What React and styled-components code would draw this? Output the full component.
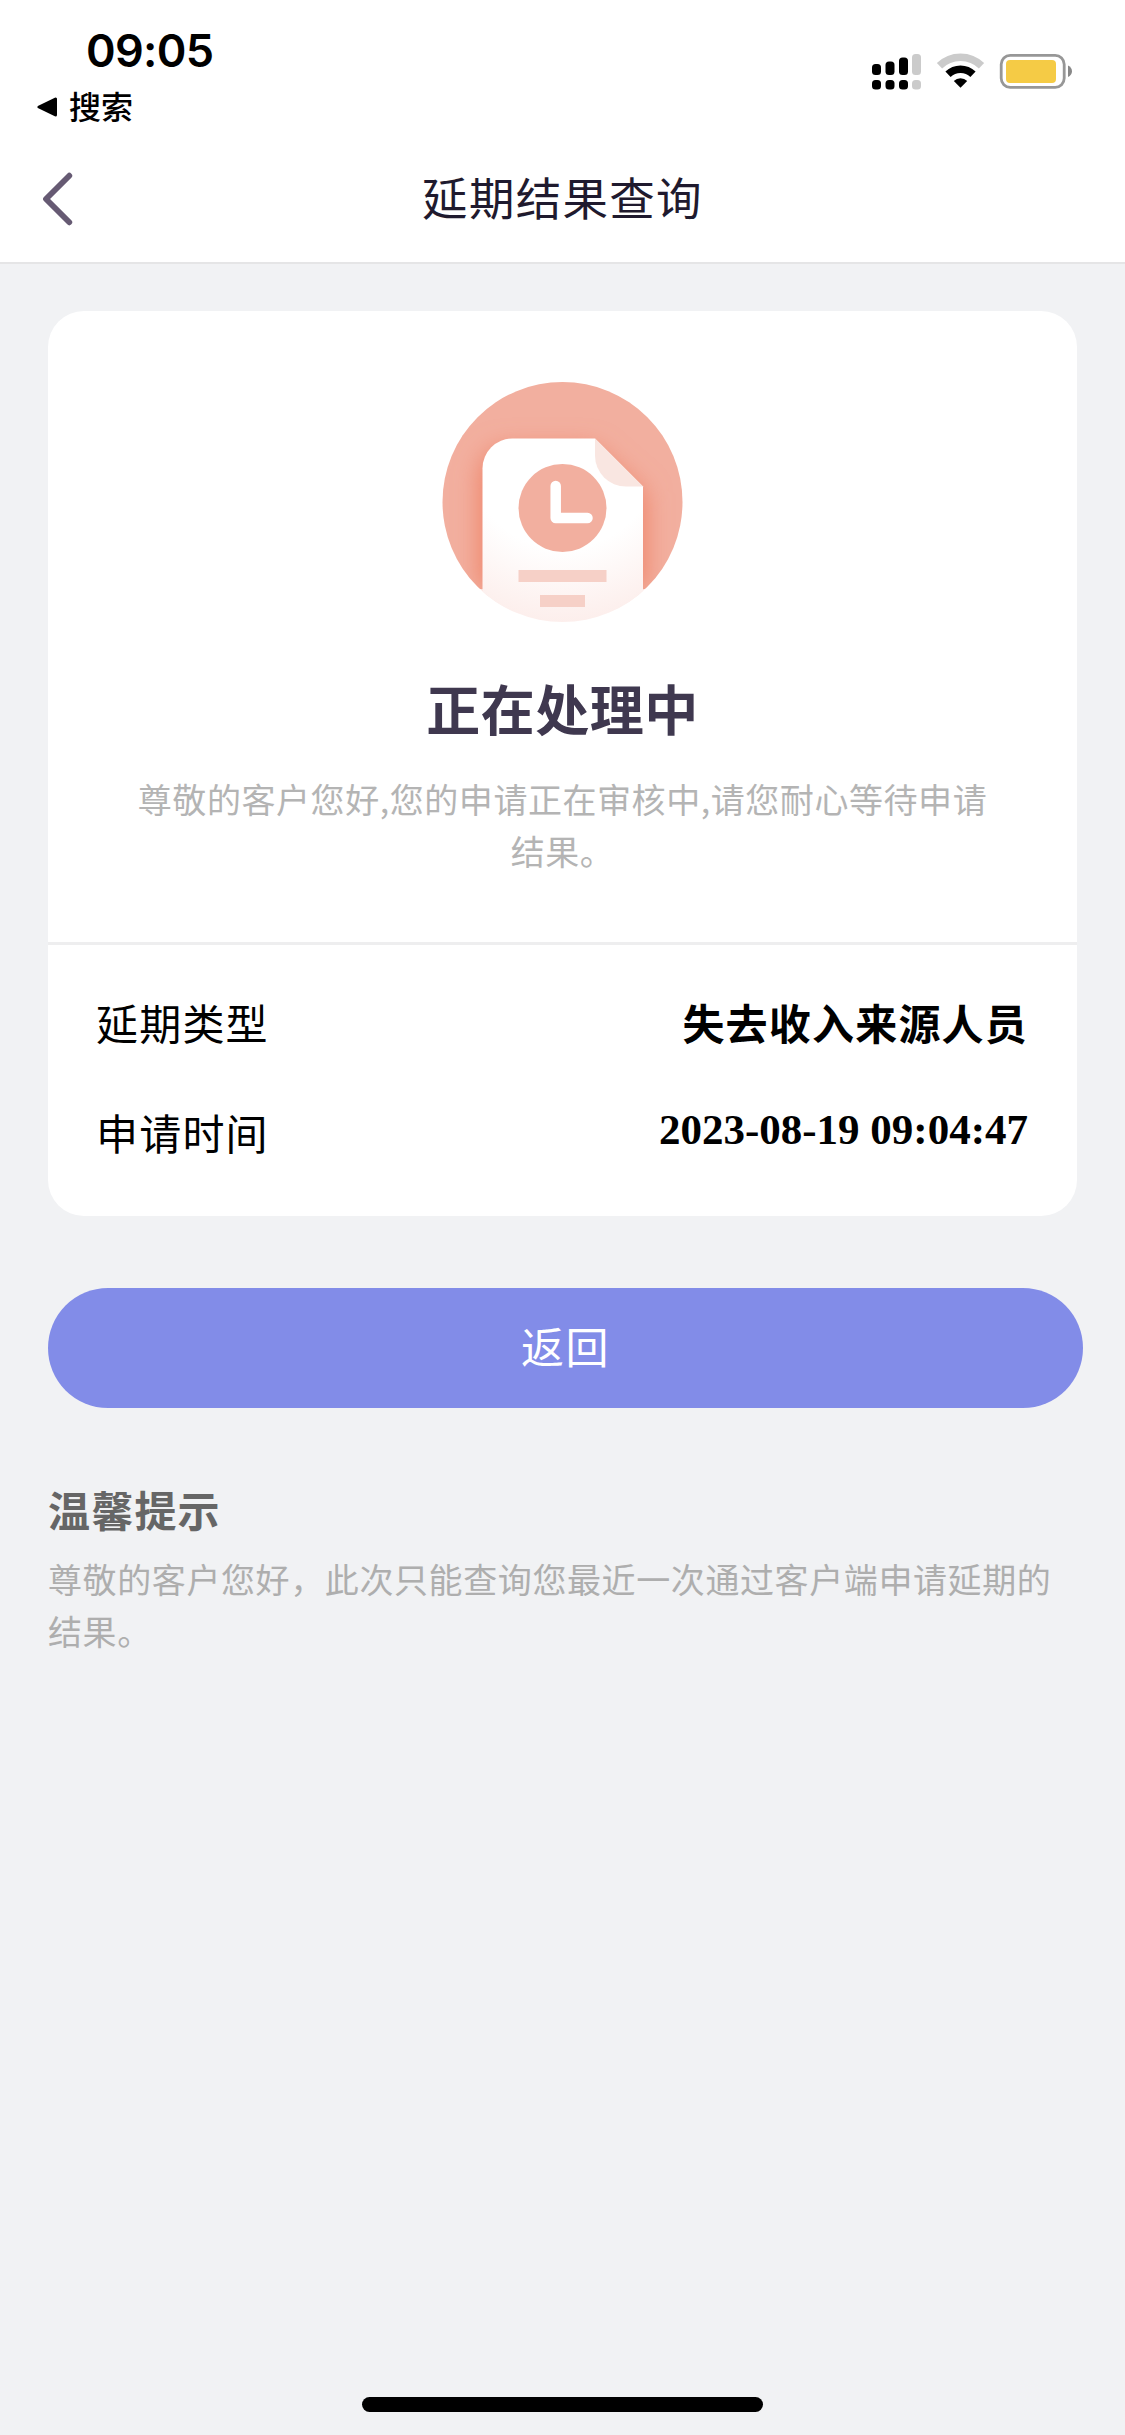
import React from "react";
import styled, { createGlobalStyle } from "styled-components";

const GlobalStyle = createGlobalStyle`
  * {
    box-sizing: border-box;
  }
  body {
    margin: 0;
    background: #f1f2f4;
    font-family: "Noto Sans CJK SC", sans-serif;
  }
`;

const Page = styled.div`
  display: flex;
  flex-direction: column;
  height: 2435px;
  overflow: hidden;
`;

const Header = styled.header`
  height: 264px;
  background: #fff;
  border-bottom: 2px solid #e5e5e6;
`;

const StatusBar = styled.div`
  display: flex;
  justify-content: space-between;
  height: 132px;
`;

const Clock = styled.div`
  height: 80px;
  padding: 19px 0 0 86px;
  font: 600 45px/64px Inter, sans-serif;
  letter-spacing: -0.7px;
  color: #000;
`;

const BackToApp = styled.div`
  display: flex;
  align-items: center;
  gap: 11px;
  height: 50px;
  padding-left: 37px;
  font-size: 32px;
  font-weight: 500;
  line-height: 50px;

  svg {
    margin-top: 3px;
  }
`;

const StatusIcons = styled.svg`
  display: block;
  margin: 48px 45px 0 0;
`;

const NavBar = styled.div`
  display: grid;
  grid-template-columns: 200px 1fr 200px;
  align-items: center;
  height: 134px;
`;

const BackIcon = styled.svg`
  display: block;
  margin-left: 38px;
`;

const Title = styled.h1`
  margin: 0 0 6px;
  text-align: center;
  font-size: 45.5px;
  font-weight: 400;
  line-height: 66px;
  letter-spacing: 1.3px;
  color: #1f1a2e;
`;

const Card = styled.section`
  width: 1029px;
  height: 905px;
  margin: 47px 0 0 48px;
  background: #fff;
  border-radius: 36px;
`;

const Result = styled.div`
  display: flex;
  flex-direction: column;
  align-items: center;
  height: 634px;
  padding-top: 71px;
  border-bottom: 3px solid #eeeeef;
`;

const Status = styled.h2`
  margin: 46px 0 0;
  font-size: 54px;
  font-weight: 700;
  line-height: 80px;
  letter-spacing: 0.5px;
  color: #3f384f;
`;

const Message = styled.p`
  width: 870px;
  margin: 25px 0 0;
  text-align: center;
  font-size: 34px;
  line-height: 52px;
  letter-spacing: 0.56px;
  color: #b4b4b4;
`;

const Details = styled.dl`
  display: flex;
  flex-direction: column;
  margin: 0;
  padding: 22px 49px 0 48px;
`;

const Row = styled.div`
  display: flex;
  justify-content: space-between;
  height: 110px;
  line-height: 110px;
  font-size: 42px;
  color: #000;
`;

const Label = styled.dt`
  letter-spacing: 1.2px;
`;

const Value = styled.dd`
  margin: 0;
  font-weight: 700;
  letter-spacing: 1.2px;
`;

const TimeValue = styled(Value)`
  font-family: "Liberation Serif", serif;
  font-size: 43px;
  line-height: 106px;
  letter-spacing: 0;
`;

const ReturnButton = styled.button`
  width: 1035px;
  height: 120px;
  margin: 72px 0 0 48px;
  padding: 0 0 6px;
  border: 0;
  border-radius: 60px;
  background: #828ce8;
  color: #fff;
  font-family: inherit;
  font-size: 43px;
  font-weight: 400;
  letter-spacing: 1.5px;
`;

const Tips = styled.section`
  width: 1029px;
  margin: 69px 0 0 48px;
`;

const TipsTitle = styled.h3`
  margin: 0;
  font-size: 42px;
  font-weight: 700;
  line-height: 64px;
  letter-spacing: 1.2px;
  color: #666;
`;

const TipsText = styled.p`
  margin: 12px 0 0;
  font-size: 34px;
  line-height: 52px;
  letter-spacing: 0.6px;
  color: #aeaeae;
`;

const HomeIndicator = styled.div`
  width: 401px;
  height: 15px;
  margin: auto auto 23px;
  border-radius: 8px;
  background: #000;
`;

const bars = [
  { x: 0, y: 16, height: 11, color: "#000" },
  { x: 13.5, y: 13.5, height: 13.5, color: "#000" },
  { x: 27, y: 9.5, height: 17.5, color: "#000" },
  { x: 40, y: 6, height: 21, color: "#cbcbcb" },
];

function PhoneStatus() {
  return (
    <StatusIcons width="208" height="48" viewBox="0 0 208 48">
      {bars.map((bar) => (
        <g key={bar.x} fill={bar.color}>
          <rect x={bar.x} y={bar.y} width="9" height={bar.height} rx="3.5" />
          <rect x={bar.x} y="32" width="9" height="9.5" rx="3.5" />
        </g>
      ))}
      <g fill="none" strokeWidth="7.5">
        <path d="M67.5 17.8A30 30 0 0 1 109.5 17.8" stroke="#cbcbcb" />
        <path d="M76 26.2A18 18 0 0 1 101 26.2" stroke="#000" />
      </g>
      <path d="M88.5 39.8L81.8 33A9.6 9.6 0 0 1 95.2 33Z" fill="#000" />
      <rect x="129.2" y="7.3" width="63" height="32" rx="9" fill="none" stroke="#979797" strokeWidth="2.8" />
      <rect x="134" y="12" width="50" height="23" rx="4" fill="#f5cb45" />
      <path d="M196 17.5Q200 19.5 200 23.2Q200 27 196 29Z" fill="#888" />
    </StatusIcons>
  );
}

function PendingIcon() {
  return (
    <svg width="241" height="240" viewBox="0 0 241 240">
      <defs>
        <clipPath id="disc">
          <circle cx="120.5" cy="120" r="120" />
        </clipPath>
        <clipPath id="sheet">
          <circle cx="120.5" cy="119.5" r="120.5" />
        </clipPath>
        <filter id="shadow" x="-30%" y="-30%" width="160%" height="160%">
          <feGaussianBlur stdDeviation="13" />
        </filter>
        <radialGradient id="paper" gradientUnits="userSpaceOnUse" cx="121" cy="70" r="185">
          <stop offset="0.52" stopColor="#fff" />
          <stop offset="1" stopColor="#fcebe8" />
        </radialGradient>
      </defs>
      <g clipPath="url(#disc)">
        <path d="M0 0H241V207H0Z" fill="#f2af9f" />
        <path d="M38 207V100Q38 66 68 66H150L203 112V207Z" fill="#ef8266" filter="url(#shadow)" />
      </g>
      <path
        d="M40.5 240V86.5A30 30 0 0 1 70.5 56.5H153L201 104.5V240Z"
        fill="url(#paper)"
        clipPath="url(#sheet)"
      />
      <path d="M153 56.5L201 104.5H184A31 31 0 0 1 153 73.5Z" fill="#f9e6e1" />
      <circle cx="120.5" cy="126" r="44" fill="#f2af9f" />
      <path d="M113.7 104V136H145.5" fill="none" stroke="#fff" strokeWidth="10.5" strokeLinecap="round" strokeLinejoin="round" />
      <rect x="76.5" y="188" width="88" height="12" fill="#f6d0c7" />
      <rect x="98" y="213" width="45" height="12" fill="#f6d0c7" />
    </svg>
  );
}

function App() {
  return (
    <Page>
      <GlobalStyle />
      <Header>
        <StatusBar>
          <div>
            <Clock>09:05</Clock>
            <BackToApp>
              <svg width="21" height="20" viewBox="0 0 21 20">
                <path d="M2 10L18.5 2V18Z" stroke="#000" strokeWidth="3" strokeLinejoin="round" />
              </svg>
              搜索
            </BackToApp>
          </div>
          <PhoneStatus />
        </StatusBar>
        <NavBar>
          <BackIcon width="40" height="60" viewBox="0 0 40 60">
            <path d="M31.3 6.7L8 30L31.3 53.3" fill="none" stroke="#665a73" strokeWidth="5.8" strokeLinecap="round" strokeLinejoin="round" />
          </BackIcon>
          <Title>延期结果查询</Title>
        </NavBar>
      </Header>

      <Card>
        <Result>
          <PendingIcon />
          <Status>正在处理中</Status>
          <Message>尊敬的客户您好,您的申请正在审核中,请您耐心等待申请结果。</Message>
        </Result>
        <Details>
          <Row>
            <Label>延期类型</Label>
            <Value>失去收入来源人员</Value>
          </Row>
          <Row>
            <Label>申请时间</Label>
            <TimeValue>2023-08-19 09:04:47</TimeValue>
          </Row>
        </Details>
      </Card>

      <ReturnButton>返回</ReturnButton>

      <Tips>
        <TipsTitle>温馨提示</TipsTitle>
        <TipsText>尊敬的客户您好，此次只能查询您最近一次通过客户端申请延期的结果。</TipsText>
      </Tips>

      <HomeIndicator />
    </Page>
  );
}

export default App;
